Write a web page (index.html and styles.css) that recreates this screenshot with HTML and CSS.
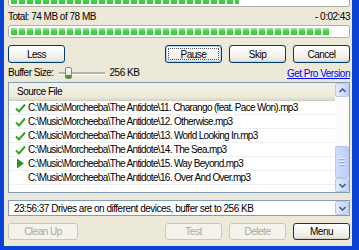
FILE: index.html
```html
<!DOCTYPE html>
<html lang="en">
<head>
    <meta charset="UTF-8">
    <title>Copy Progress</title>
    <link rel="stylesheet" href="styles.css">
</head>
<body>
    <div class="window">
        <!-- File progress -->
        <div class="progress progress-top">
            <div class="fill" style="width: 68%"></div>
        </div>
        <div class="totals">
            <span>Total: 74 MB of 78 MB</span>
            <span>- 0:02:43</span>
        </div>
        <div class="progress">
            <div class="fill" style="width: 95%"></div>
        </div>

        <!-- Controls -->
        <div class="controls">
            <button class="btn">Less</button>
            <div class="spacer"></div>
            <button class="btn focused">Pause</button>
            <button class="btn">Skip</button>
            <button class="btn">Cancel</button>
        </div>
        <div class="buffer-row">
            <span>Buffer Size:</span>
            <div class="slider">
                <div class="track"></div>
                <div class="thumb"></div>
            </div>
            <span>256 KB</span>
            <a class="pro-link" href="#">Get Pro Version</a>
        </div>

        <!-- File list -->
        <div class="list">
            <div class="list-body">
                <div class="list-header">Source File</div>
                <div class="row"><span class="mark"><svg width="11" height="10" viewBox="0 0 11 10"><path d="M1 5.5 L4 8.5 L10 1.5" fill="none" stroke="#32a232" stroke-width="2"/></svg></span>C:\Music\Morcheeba\The Antidote\11. Charango (feat. Pace Won).mp3</div>
                <div class="row"><span class="mark"><svg width="11" height="10" viewBox="0 0 11 10"><path d="M1 5.5 L4 8.5 L10 1.5" fill="none" stroke="#32a232" stroke-width="2"/></svg></span>C:\Music\Morcheeba\The Antidote\12. Otherwise.mp3</div>
                <div class="row"><span class="mark"><svg width="11" height="10" viewBox="0 0 11 10"><path d="M1 5.5 L4 8.5 L10 1.5" fill="none" stroke="#32a232" stroke-width="2"/></svg></span>C:\Music\Morcheeba\The Antidote\13. World Looking In.mp3</div>
                <div class="row"><span class="mark"><svg width="11" height="10" viewBox="0 0 11 10"><path d="M1 5.5 L4 8.5 L10 1.5" fill="none" stroke="#32a232" stroke-width="2"/></svg></span>C:\Music\Morcheeba\The Antidote\14. The Sea.mp3</div>
                <div class="row"><span class="mark"><svg width="9" height="11" viewBox="0 0 9 11"><path d="M1 0.5 L8 5.5 L1 10.5 Z" fill="#1f9a1f"/></svg></span>C:\Music\Morcheeba\The Antidote\15. Way Beyond.mp3</div>
                <div class="row"><span class="mark"></span>C:\Music\Morcheeba\The Antidote\16. Over And Over.mp3</div>
            </div>
            <div class="scrollbar">
                <div class="sb-btn">
                    <svg width="7" height="5" viewBox="0 0 7 5"><path d="M0.5 4 L3.5 1 L6.5 4" fill="none" stroke="#4d6185" stroke-width="1.6"/></svg>
                </div>
                <div class="sb-track"></div>
                <div class="sb-thumb">
                    <div class="grip"></div>
                    <div class="grip"></div>
                    <div class="grip"></div>
                </div>
                <div class="sb-btn">
                    <svg width="7" height="5" viewBox="0 0 7 5"><path d="M0.5 1 L3.5 4 L6.5 1" fill="none" stroke="#4d6185" stroke-width="1.6"/></svg>
                </div>
            </div>
        </div>

        <!-- Status log -->
        <div class="status">
            <span class="status-text">23:56:37 Drives are on different devices, buffer set to 256 KB</span>
            <div class="sb-btn drop">
                <svg width="7" height="5" viewBox="0 0 7 5"><path d="M0.5 1 L3.5 4 L6.5 1" fill="none" stroke="#4d6185" stroke-width="1.6"/></svg>
            </div>
        </div>

        <div class="actions">
            <button class="btn wide" disabled>Clean Up</button>
            <div class="spacer"></div>
            <button class="btn" disabled>Test</button>
            <button class="btn" disabled>Delete</button>
            <button class="btn">Menu</button>
        </div>
    </div>
</body>
</html>
```

FILE: styles.css
```css
body {
    margin: 0;
    padding: 0;
    font-family: "Liberation Sans", Arial, sans-serif;
    font-size: 10px;
    letter-spacing: -0.5px;
    color: #000;
    background: #ece9d8;
    overflow: hidden;
}

.window {
    width: 359px;
    height: 250px;
    box-sizing: border-box;
    background: #ece9d8;
    border-left: 4px solid #0843d6;
    border-right: 7px solid #0843d6;
    border-bottom: 4px solid #0843d6;
    padding: 0 2px 0 4px;
    display: flex;
    flex-direction: column;
    overflow: hidden;
}

/* Progress bars */
.progress {
    flex: none;
    height: 13px;
    box-sizing: border-box;
    border: 1px solid #b2b0a4;
    border-radius: 3px;
    background: #fff;
    padding: 2px;
}

.progress-top {
    margin-top: -7px;
    height: 14px;
}

.progress .fill {
    height: 100%;
    background:
        linear-gradient(to bottom, rgba(255,255,255,0.5) 0, rgba(255,255,255,0) 50%, rgba(0,60,0,0.06) 100%),
        repeating-linear-gradient(to right, #3fd23f 0, #3fd23f 6px, #fff 6px, #fff 8px);
}

.totals {
    flex: none;
    display: flex;
    justify-content: space-between;
    height: 18px;
    line-height: 20px;
}

/* Buttons */
.controls,
.actions {
    flex: none;
    display: flex;
    gap: 7px;
}

.controls {
    margin-top: 7px;
}

.spacer {
    flex: 1;
}

.btn {
    width: 57px;
    height: 18px;
    padding: 0;
    font-family: inherit;
    font-size: 10px;
    letter-spacing: -0.5px;
    color: #000;
    background: linear-gradient(to bottom, #ffffff 0, #f4f3ee 60%, #e3e1d6 100%);
    border: 1px solid #003c74;
    border-radius: 3px;
    box-shadow: inset 0 -1px 0 #d6d0c5;
}

.btn.focused {
    box-shadow: inset 0 0 0 1px #b8d3f9, inset 0 -1px 0 #d6d0c5;
    outline: 1px dotted #555;
    outline-offset: -4px;
}

.btn.wide {
    width: 70px;
}

.btn:disabled {
    color: #aca899;
    border-color: #c9c7ba;
    background: #f5f4ea;
    box-shadow: none;
}

/* Buffer size */
.buffer-row {
    flex: none;
    display: flex;
    align-items: center;
    height: 19px;
}

.slider {
    position: relative;
    width: 46px;
    height: 12px;
    margin: 0 5px 0 5px;
}

.slider .track {
    position: absolute;
    left: 0;
    right: 0;
    top: 5px;
    height: 2px;
    background: #b5b2a3;
    border-bottom: 1px solid #fff;
}

.slider .thumb {
    position: absolute;
    left: 6px;
    top: 0;
    width: 5px;
    height: 10px;
    border: 1px solid #8a8878;
    border-radius: 2px;
    background: linear-gradient(to bottom, #fdfdfb 0, #e9e7dd 65%, #26b526 65%, #1da31d 100%);
}

.pro-link {
    margin-left: auto;
    margin-top: 2px;
    color: #0000ff;
    text-decoration: underline;
}

/* File list */
.list {
    flex: none;
    height: 111px;
    box-sizing: border-box;
    border: 1px solid #7f9db9;
    background: #fff;
    display: flex;
}

.list-body {
    flex: 1;
    overflow: hidden;
}

.list-header {
    height: 17px;
    line-height: 17px;
    padding-left: 8px;
    background: linear-gradient(to bottom, #f4f2e7 0, #ebeadb 80%, #dcd9c8 100%);
    border-bottom: 1px solid #d0cdbc;
}

.row {
    height: 13px;
    border-bottom: 1px solid #efefef;
    white-space: nowrap;
    display: flex;
    align-items: center;
    letter-spacing: -0.67px;
}

.mark {
    flex: none;
    width: 12px;
    height: 13px;
    margin: 0 2px 0 5px;
    display: flex;
    align-items: center;
    justify-content: center;
}

/* Scrollbar */
.scrollbar {
    flex: none;
    width: 14px;
    display: flex;
    flex-direction: column;
    background: #fbfbf8;
}

.sb-btn {
    flex: none;
    width: 14px;
    height: 14px;
    box-sizing: border-box;
    border: 1px solid #b8c9ee;
    border-radius: 2px;
    background: linear-gradient(to right, #e2ebfd, #c1d3fb);
    display: flex;
    align-items: center;
    justify-content: center;
}

.sb-track {
    flex: 1;
}

.sb-thumb {
    height: 32px;
    box-sizing: border-box;
    border: 1px solid #b8c9ee;
    border-radius: 2px;
    background: linear-gradient(to right, #cfdcfc, #bccffa);
    display: flex;
    flex-direction: column;
    align-items: center;
    justify-content: center;
    gap: 1px;
}

.grip {
    width: 6px;
    height: 1px;
    background: #eef3fe;
    border-bottom: 1px solid #8caaf0;
}

/* Status log */
.status {
    flex: none;
    margin-top: 7px;
    height: 16px;
    box-sizing: border-box;
    border: 1px solid #7f9db9;
    background: #fff;
    display: flex;
    align-items: center;
    padding-left: 5px;
}

.status-text {
    flex: 1;
    white-space: nowrap;
}

.drop {
    height: 14px;
}

.actions {
    margin-top: 7px;
}

.actions .btn {
    height: 17px;
}
```
